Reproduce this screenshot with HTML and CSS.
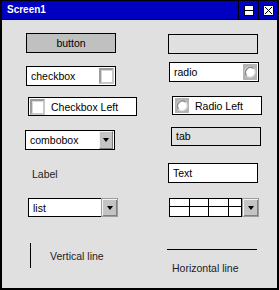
FILE: index.html
```html
<!DOCTYPE html>
<html lang="en">
<head>
    <meta charset="UTF-8">
    <title>Screen1</title>
    <link rel="stylesheet" href="styles.css">
</head>
<body>
    <div class="window">
        <div class="titlebar">
            <span class="title">Screen1</span>
            <span class="tb-btn tb-btn-max">
                <svg width="10" height="11" viewBox="0 0 10 11">
                    <rect x="0.5" y="0.5" width="9" height="10" fill="#fff" stroke="#000"/>
                    <line x1="0" y1="5.5" x2="10" y2="5.5" stroke="#000"/>
                </svg>
            </span>
            <span class="tb-btn tb-btn-close">
                <svg width="11" height="11" viewBox="0 0 11 11">
                    <rect x="0.5" y="0.5" width="10" height="10" fill="#fff" stroke="#000"/>
                    <path d="M2 2 L9 9 M9 2 L2 9" stroke="#000" stroke-width="1"/>
                </svg>
            </span>
        </div>

        <div class="canvas">
            <!-- columna izquierda -->
            <div class="col col-left">
                <div class="btn w-button">button</div>
                <div class="field w-checkbox">
                    <span class="field-text">checkbox</span>
                    <span class="check"></span>
                </div>
                <div class="field w-checkleft">
                    <span class="check"></span>
                    <span class="field-text">Checkbox Left</span>
                </div>
                <div class="field w-combo">
                    <span class="field-text">combobox</span>
                    <span class="drop"><i class="tri"></i></span>
                </div>
                <div class="label w-label">Label</div>
                <div class="field w-list">
                    <span class="field-text">list</span>
                    <span class="drop drop-list"><i class="tri"></i></span>
                </div>
                <div class="vline-group">
                    <span class="vline"></span>
                    <span class="label">Vertical line</span>
                </div>
            </div>

            <!-- columna derecha -->
            <div class="col col-right">
                <div class="blank w-blank"></div>
                <div class="field w-radio">
                    <span class="field-text">radio</span>
                    <span class="radio">
                        <svg width="14" height="16" viewBox="0 0 14 16">
                            <rect width="14" height="16" fill="#b4b4b4"/>
                            <circle cx="7" cy="8" r="5" fill="#fff" stroke="#e4e4e4" stroke-width="1.4"/>
                            <path d="M3.5 11.5 A5 5 0 0 1 10.5 4.5" fill="none" stroke="#8a8a8a" stroke-width="1.4"/>
                        </svg>
                    </span>
                </div>
                <div class="field w-radioleft">
                    <span class="radio">
                        <svg width="14" height="15" viewBox="0 0 14 15">
                            <rect width="14" height="15" fill="#b4b4b4"/>
                            <circle cx="7" cy="7.5" r="5" fill="#fff" stroke="#e4e4e4" stroke-width="1.4"/>
                            <path d="M3.5 11 A5 5 0 0 1 10.5 4" fill="none" stroke="#8a8a8a" stroke-width="1.4"/>
                        </svg>
                    </span>
                    <span class="field-text">Radio Left</span>
                </div>
                <div class="tab w-tab">tab</div>
                <div class="field w-text">
                    <span class="field-text">Text</span>
                </div>
                <div class="grid-box w-table">
                    <div class="cells">
                        <span></span><span></span><span></span><span></span>
                        <span></span><span></span><span></span><span></span>
                    </div>
                    <span class="drop drop-list"><i class="tri"></i></span>
                </div>
                <span class="hline"></span>
                <span class="label w-hltext">Horizontal line</span>
            </div>
        </div>
    </div>
</body>
</html>
```

FILE: styles.css
```css
* {
    margin: 0;
    padding: 0;
    box-sizing: border-box;
}

body {
    font-family: 'Liberation Sans', Arial, sans-serif;
    font-size: 10.5px;
    color: #000;
    background: #fff;
}

/* Ventana */
.window {
    width: 279px;
    height: 290px;
    border: 2px solid #000;
    border-top-width: 1px;
    background: #e0e0e0;
    display: flex;
    flex-direction: column;
}

.titlebar {
    height: 19px;
    background: #0000c0;
    border-bottom: 1px solid #000;
    display: flex;
    align-items: stretch;
}

.title {
    flex: 1;
    color: #fff;
    font-weight: bold;
    font-size: 10px;
    line-height: 18px;
    padding-left: 5px;
}

.tb-btn {
    border-left: 1px solid #000;
    display: flex;
    align-items: center;
    justify-content: center;
}

.tb-btn svg {
    display: block;
}

.tb-btn-max {
    width: 20px;
}

.tb-btn-close {
    width: 19px;
}

/* Lienzo */
.canvas {
    flex: 1;
    display: flex;
}

.col {
    display: flex;
    flex-direction: column;
    align-items: flex-start;
}

.col-left {
    width: 163px;
}

.col-right {
    flex: 1;
}

/* Widgets */
.btn {
    width: 90px;
    height: 20px;
    background: #c0c0c0;
    border: 1px solid #000;
    text-align: center;
    line-height: 18px;
}

.blank {
    width: 90px;
    height: 20px;
    border: 1px solid #000;
}

.field {
    width: 90px;
    height: 20px;
    border: 1px solid #000;
    background: #fff;
    display: flex;
    align-items: center;
}

.field-text {
    flex: 1;
    padding-left: 4px;
    white-space: nowrap;
}

.check {
    width: 15px;
    height: 16px;
    background: #fff;
    border: 2px solid;
    border-color: #9c9c9c #c8c8c8 #c8c8c8 #9c9c9c;
    box-shadow: inset 1px 1px 0 #d8d8d8;
    margin-right: 1px;
}

.radio svg {
    display: block;
}

.radio {
    margin-right: 1px;
}

.drop {
    width: 14px;
    height: 18px;
    margin-right: 1px;
    background: #c4c4c4;
    border: 1px solid;
    border-color: #f4f4f4 #7c7c7c #7c7c7c #f4f4f4;
    display: flex;
    align-items: center;
    justify-content: center;
}

.drop-list {
    width: 17px;
    height: 19px;
    margin: -1px -1px -1px 0;
    border-color: #9c9c9c;
    box-shadow: inset 1px 1px 0 #f4f4f4, inset -1px -1px 0 #808080;
}

.tri {
    display: block;
    width: 0;
    height: 0;
    border-left: 3px solid transparent;
    border-right: 3px solid transparent;
    border-top: 4px solid #000;
}

.tab {
    width: 90px;
    height: 19px;
    border: 1px solid #000;
    padding-left: 4px;
    line-height: 17px;
}

.label {
    color: #222;
    line-height: 14px;
    white-space: nowrap;
}

.grid-box {
    width: 90px;
    height: 19px;
    border: 1px solid #000;
    background: #fff;
    display: flex;
}

.cells {
    width: 72px;
    display: grid;
    grid-template-columns: 20px 19px 20px 13px;
    grid-template-rows: 8px 9px;
}

.cells span {
    border-right: 1px solid #000;
}

.cells span:nth-child(-n+4) {
    border-bottom: 1px solid #000;
}

.vline-group {
    display: flex;
    align-items: center;
    gap: 19px;
    margin: 26px 0 0 28px;
}

.vline {
    width: 1px;
    height: 25px;
    background: #000;
}

.hline {
    width: 90px;
    height: 1px;
    background: #000;
    margin: 32px 0 0 2px;
}

/* Posiciones en el lienzo */
.w-button { margin: 13px 0 0 24px; }
.w-checkbox { margin: 13px 0 0 24px; }
.w-checkleft { margin: 11px 0 0 26px; width: 109px; height: 19px; }
.w-checkleft .check { margin-left: 1px; margin-right: 2px; }
.w-combo { margin: 14px 0 0 23px; }
.w-label { margin: 17px 0 0 30px; }
.w-list { margin: 17px 0 0 26px; height: 19px; }

.w-blank { margin: 14px 0 0 3px; }
.w-radio { margin: 8px 0 0 4px; }
.w-radioleft { margin: 14px 0 0 7px; height: 19px; }
.w-radioleft .radio { margin-left: 2px; margin-right: 2px; }
.w-tab { margin: 12px 0 0 6px; }
.w-text { margin: 17px 0 0 3px; }
.w-table { margin: 15px 0 0 4px; }
.w-hltext { margin: 11px 0 0 7px; }
```
